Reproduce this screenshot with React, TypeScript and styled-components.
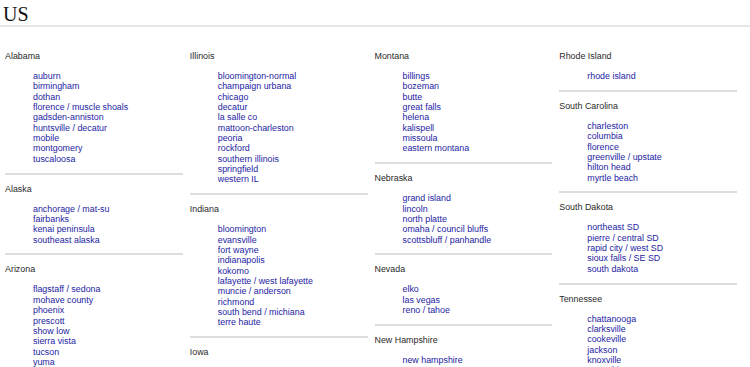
import React from 'react';
import styled, { createGlobalStyle } from 'styled-components';

const GlobalStyle = createGlobalStyle`
  html, body {
    margin: 0;
    padding: 0;
    background: #fff;
    overflow: hidden;
  }
  body {
    font-family: 'Liberation Sans', Arial, sans-serif;
  }
`;

const Page = styled.div`
  width: 750px;
`;

const Title = styled.h1`
  margin: 0;
  padding: 4px 0 0 3px;
  font-family: 'Liberation Serif', 'Times New Roman', serif;
  font-weight: normal;
  font-size: 20px;
  line-height: 21px;
  color: #111;
  border-bottom: 2px solid #e6e6e6;
`;

const Columns = styled.div`
  display: grid;
  grid-template-columns: repeat(4, 1fr);
  align-items: start;
  margin-top: 15px;
  padding: 0 6px 0 5px;
`;

const Column = styled.div`
  display: flex;
  flex-direction: column;
`;

const StateBlock = styled.section`
  margin-right: 7px;
  padding: 8px 0 8.5px;
  border-bottom: 2px solid #dedede;
`;

const StateName = styled.h4`
  margin: 0;
  font-size: 8.9px;
  line-height: 12px;
  font-weight: normal;
  color: #2a2a2a;
`;

const CityList = styled.ul`
  list-style: none;
  margin: 9px 0 0;
  padding: 0 0 0 28px;
`;

const City = styled.li`
  font-size: 8.9px;
  line-height: 10.35px;
  white-space: nowrap;
`;

const CityLink = styled.a`
  color: #2424a4;
  text-decoration: none;
`;

type State = { name: string; cities: string[] };

const columns: State[][] = [
  [
    {
      name: 'Alabama',
      cities: ['auburn', 'birmingham', 'dothan', 'florence / muscle shoals', 'gadsden-anniston', 'huntsville / decatur', 'mobile', 'montgomery', 'tuscaloosa'],
    },
    { name: 'Alaska', cities: ['anchorage / mat-su', 'fairbanks', 'kenai peninsula', 'southeast alaska'] },
    {
      name: 'Arizona',
      cities: ['flagstaff / sedona', 'mohave county', 'phoenix', 'prescott', 'show low', 'sierra vista', 'tucson', 'yuma'],
    },
  ],
  [
    {
      name: 'Illinois',
      cities: ['bloomington-normal', 'champaign urbana', 'chicago', 'decatur', 'la salle co', 'mattoon-charleston', 'peoria', 'rockford', 'southern illinois', 'springfield', 'western IL'],
    },
    {
      name: 'Indiana',
      cities: ['bloomington', 'evansville', 'fort wayne', 'indianapolis', 'kokomo', 'lafayette / west lafayette', 'muncie / anderson', 'richmond', 'south bend / michiana', 'terre haute'],
    },
    { name: 'Iowa', cities: ['ames', 'cedar rapids', 'des moines'] },
  ],
  [
    {
      name: 'Montana',
      cities: ['billings', 'bozeman', 'butte', 'great falls', 'helena', 'kalispell', 'missoula', 'eastern montana'],
    },
    {
      name: 'Nebraska',
      cities: ['grand island', 'lincoln', 'north platte', 'omaha / council bluffs', 'scottsbluff / panhandle'],
    },
    { name: 'Nevada', cities: ['elko', 'las vegas', 'reno / tahoe'] },
    { name: 'New Hampshire', cities: ['new hampshire'] },
  ],
  [
    { name: 'Rhode Island', cities: ['rhode island'] },
    {
      name: 'South Carolina',
      cities: ['charleston', 'columbia', 'florence', 'greenville / upstate', 'hilton head', 'myrtle beach'],
    },
    {
      name: 'South Dakota',
      cities: ['northeast SD', 'pierre / central SD', 'rapid city / west SD', 'sioux falls / SE SD', 'south dakota'],
    },
    {
      name: 'Tennessee',
      cities: ['chattanooga', 'clarksville', 'cookeville', 'jackson', 'knoxville', 'memphis'],
    },
  ],
];

function App() {
  return (
    <Page>
      <GlobalStyle />
      <Title>US</Title>
      <Columns>
        {columns.map((states, i) => (
          <Column key={i}>
            {states.map((state) => (
              <StateBlock key={state.name}>
                <StateName>{state.name}</StateName>
                <CityList>
                  {state.cities.map((city) => (
                    <City key={city}>
                      <CityLink href="#">{city}</CityLink>
                    </City>
                  ))}
                </CityList>
              </StateBlock>
            ))}
          </Column>
        ))}
      </Columns>
    </Page>
  );
}

export default App;
